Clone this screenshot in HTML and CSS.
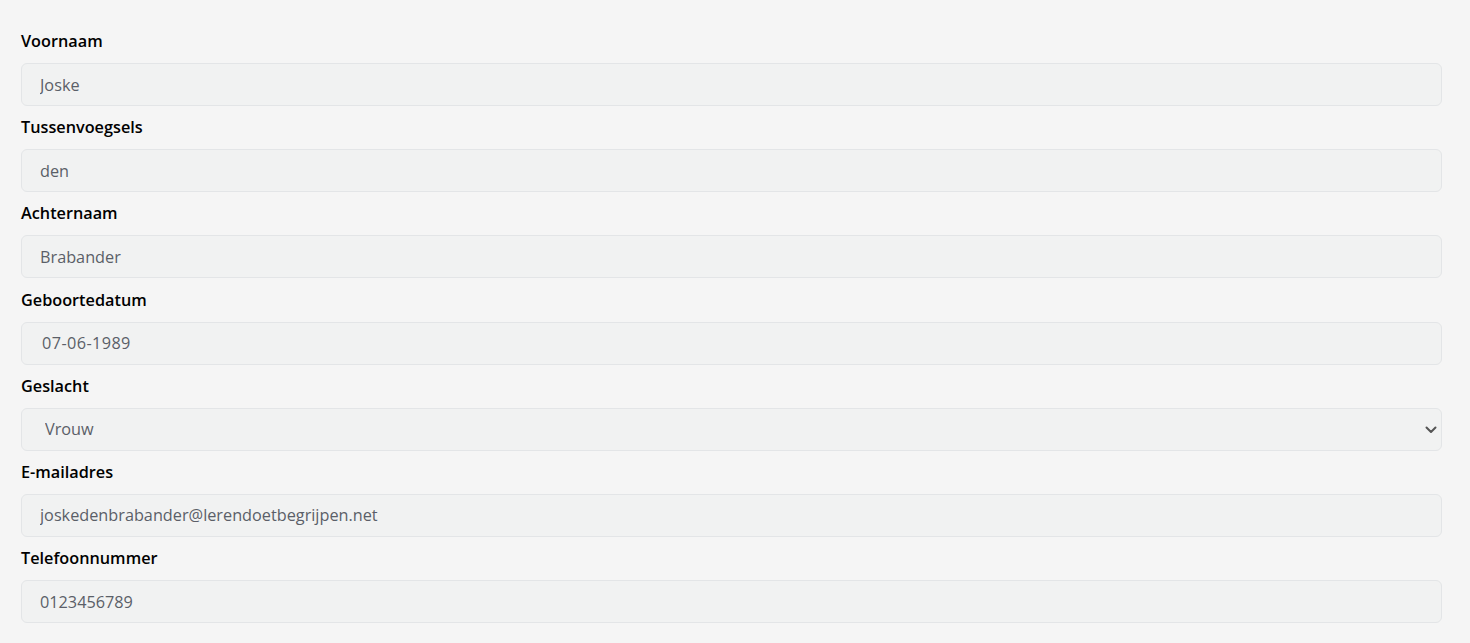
FILE: index.html
```html
<!DOCTYPE html>
<html lang="nl">
<head>
  <meta charset="UTF-8">
  <title>Gegevens</title>
  <link rel="stylesheet" href="styles.css">
</head>
<body>

  <form class="formulier">
    <div class="veld">
      <label for="voornaam">Voornaam</label>
      <input type="text" id="voornaam" value="Joske">
    </div>
    <div class="veld">
      <label for="tussenvoegsels">Tussenvoegsels</label>
      <input type="text" id="tussenvoegsels" value="den">
    </div>
    <div class="veld">
      <label for="achternaam">Achternaam</label>
      <input type="text" id="achternaam" value="Brabander">
    </div>
    <div class="veld">
      <label for="geboortedatum">Geboortedatum</label>
      <input type="text" id="geboortedatum" class="datum" value="07-06-1989">
    </div>
    <div class="veld">
      <label for="geslacht">Geslacht</label>
      <div class="keuze">
        <select id="geslacht">
          <option>Man</option>
          <option selected>Vrouw</option>
          <option>Anders</option>
        </select>
        <svg class="pijl" width="12" height="8" viewBox="0 0 12 8">
          <path d="M1.5 1.5 L6 6 L10.5 1.5" fill="none" stroke="#555" stroke-width="2" stroke-linecap="round" stroke-linejoin="round"/>
        </svg>
      </div>
    </div>
    <div class="veld">
      <label for="email">E-mailadres</label>
      <input type="text" id="email" value="joskedenbrabander@lerendoetbegrijpen.net">
    </div>
    <div class="veld">
      <label for="telefoon">Telefoonnummer</label>
      <input type="text" id="telefoon" value="0123456789">
    </div>
  </form>

</body>
</html>
```

FILE: styles.css
```css
body {
  font-family: "Open Sans", Arial, sans-serif;
  margin: 0;
  background-color: #f5f5f5;
}
.formulier {
  padding: 29px 28px 0 21px;
}
.veld {
  margin-bottom: 9.2px;
}
.veld label {
  display: block;
  font-size: 16.25px;
  line-height: 24px;
  font-weight: 600;
  color: #000;
  margin-bottom: 10px;
}
.veld input,
.veld select {
  display: block;
  box-sizing: border-box;
  width: 100%;
  height: 43px;
  padding: 0 18px;
  border: 1px solid #e3e5e7;
  border-radius: 6px;
  background-color: #f1f2f2;
  font-family: "Open Sans", Arial, sans-serif;
  font-size: 16.25px;
  color: #5b5f68;
  outline: none;
}
.veld .datum {
  padding-left: 20px;
  letter-spacing: 0.4px;
}
.keuze {
  position: relative;
}
.veld select {
  appearance: none;
  -webkit-appearance: none;
  padding-left: 23px;
}
.pijl {
  position: absolute;
  right: 5px;
  top: 18px;
}
```
